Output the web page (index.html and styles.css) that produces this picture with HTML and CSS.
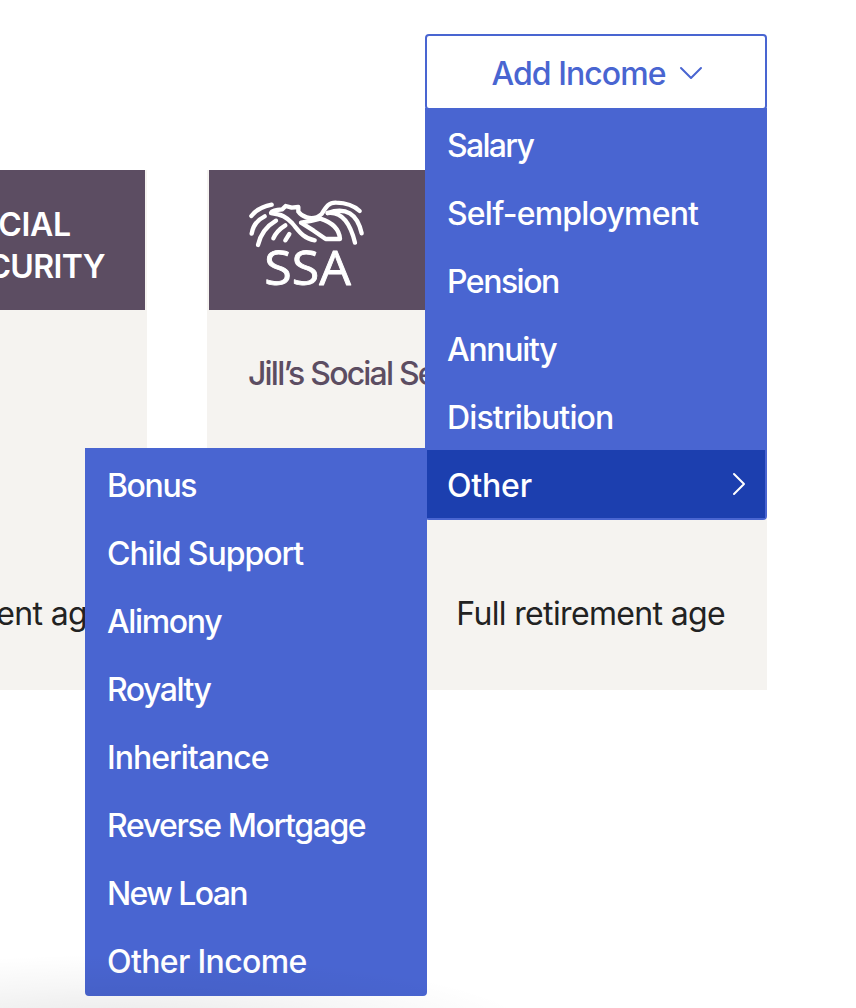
FILE: index.html
```
<!DOCTYPE html>
<html lang="en">
<head>
<meta charset="utf-8">
<title>Income</title>
<link rel="stylesheet" href="styles.css">
</head>
<body>
<main class="page">
  <section class="cards">
    <article class="card">
      <header class="card-head card-head-end"><span class="brand"><span class="brand-top">SOCIAL</span><br>SECURITY</span></header>
      <div class="card-body"><p class="card-title"></p><p class="card-age"><span class="t-age">Full retirement age</span></p></div>
    </article>
    <article class="card">
      <header class="card-head">
        <svg class="logo" viewBox="42 45 345 258" fill="none" stroke="#fff" stroke-width="13" stroke-linecap="round" stroke-linejoin="round">
          <path d="M49 93Q69 67 110 59"/>
          <path d="M50 146Q56 110 89 94"/>
          <path d="M69 180Q80 132 123 107"/>
          <path d="M115 160Q125 137 151 121"/>
          <path d="M151 166L163 147"/>
          <path d="M239 166C202 159 190 135 172 115C154 96 140 88 108 84C110 77 122 75 142 73L152 63L170 68L190 66V80Q198 92 215 97Q240 105 260 87C275 62 282 52 304 53Q348 54 374 78"/>
          <path d="M256 101Q228 109 198 113L236 137L272 162H315Q312 119 256 101"/>
          <path d="M278 84C318 79 344 107 360 173"/>
          <path d="M278 84Q360 56 380 145"/>
          <text class="logo-text" x="88" y="299" textLength="260" lengthAdjust="spacingAndGlyphs">SSA</text>
        </svg>
      </header>
      <div class="card-body"><p class="card-title"><span class="t-title">Jill’s Social Security</span></p><p class="card-age"><span class="t-age">Full retirement age</span></p></div>
    </article>
  </section>
  <div class="dropdown">
    <button class="toggle"><span class="t-add">Add Income</span>
      <svg class="chev-down" viewBox="0 0 24 14"><path d="M2 2L12 12L22 2"/></svg>
    </button>
    <ul class="menu">
      <li><span class="t-salary">Salary</span></li>
      <li><span class="t-self">Self-employment</span></li>
      <li><span class="t-pension">Pension</span></li>
      <li><span class="t-annuity">Annuity</span></li>
      <li><span class="t-dist">Distribution</span></li>
      <li class="active"><span class="t-other">Other</span>
        <svg class="chev-right" viewBox="0 0 14 24"><path d="M2 2L12 12L2 22"/></svg>
      </li>
    </ul>
    <ul class="menu submenu">
      <li><span class="t-bonus">Bonus</span></li>
      <li><span class="t-child">Child Support</span></li>
      <li><span class="t-alimony">Alimony</span></li>
      <li><span class="t-royalty">Royalty</span></li>
      <li><span class="t-inherit">Inheritance</span></li>
      <li><span class="t-reverse">Reverse Mortgage</span></li>
      <li><span class="t-loan">New Loan</span></li>
      <li><span class="t-income">Other Income</span></li>
    </ul>
  </div>
  <div class="shade"></div>
</main>
</body>
</html>
```
FILE: styles.css
```
* { box-sizing: border-box; }
body { margin: 0; background: #fff; }
.page {
  position: relative;
  width: 856px;
  height: 1008px;
  padding-top: 170px;
  overflow: hidden;
  font-family: Inter, "Liberation Sans", sans-serif;
  font-size: 32px;
  letter-spacing: -0.5px;
}
.cards { display: flex; gap: 60px; width: 1180px; margin-left: -413px; }
.card { width: 560px; height: 520px; background: #f5f3f0; }
.card-head {
  display: flex;
  height: 140px;
  margin: 0 2px;
  padding: 30px 40px;
  background: #5c4d62;
  color: #fff;
}
.card-head-end { justify-content: flex-end; align-items: center; }
.brand { font-weight: 600; line-height: 42px; padding-top: 12px; letter-spacing: -0.6px; }
.brand-top { padding-left: 5px; letter-spacing: -0.3px; }
.logo { width: 115px; height: 86px; overflow: visible; }
.logo-text {
  font-family: "Open Sans", sans-serif;
  font-size: 142px;
  font-weight: 400;
  fill: #fff;
  stroke-width: 2.5;
  letter-spacing: 0;
}
.card-body { padding: 40px 42px; }
.card-title, .card-age { margin: 0; line-height: 48px; height: 48px; white-space: nowrap; }
.card-title { color: #5c4d62; font-weight: 450; }
.card-age { margin-top: 192px; text-align: right; color: #222; }
.dropdown { position: absolute; top: 34px; left: 425px; width: 342px; }
.toggle {
  display: flex;
  justify-content: center;
  align-items: center;
  gap: 13px;
  width: 342px;
  height: 76px;
  padding: 2px 0 0 2px;
  border: 2px solid #4965d1;
  border-radius: 4px;
  background: #fff;
  color: #4965d1;
  font: inherit;
  font-weight: 450;
  letter-spacing: inherit;
}
.chev-down { width: 24px; height: 14px; }
.chev-down path, .chev-right path {
  fill: none;
  stroke: #4965d1;
  stroke-width: 2;
  stroke-linecap: round;
  stroke-linejoin: round;
}
.chev-right { width: 14px; height: 24px; margin-right: -1px; }
.chev-right path { stroke: #fff; }
.menu {
  width: 342px;
  margin: -2px 0 0;
  padding: 0;
  border: 2px solid #4965d1;
  border-radius: 0 0 4px 4px;
  background: #4965d1;
  color: #fff;
  font-weight: 450;
  list-style: none;
}
.menu li {
  display: flex;
  align-items: center;
  justify-content: space-between;
  height: 68px;
  padding: 0 20px;
  white-space: nowrap;
}
.menu li span { padding-top: 2px; }
.menu .active { background: #1c3faf; }
.submenu { position: absolute; top: 414px; left: -340px; margin: 0; }
.t-title { letter-spacing: -1.8px; margin-left: -1px; }
.t-age { letter-spacing: -0.65px; }
.t-add { letter-spacing: -0.95px; }
.t-salary { letter-spacing: -1.7px; }
.t-self { letter-spacing: -0.8px; }
.t-pension { letter-spacing: -1.5px; }
.t-annuity { letter-spacing: -1.3px; }
.t-dist { letter-spacing: -0.85px; }
.t-other { letter-spacing: -0.2px; }
.t-bonus { letter-spacing: -1.4px; }
.t-child { letter-spacing: -1.05px; }
.t-alimony { letter-spacing: -1.35px; }
.t-royalty { letter-spacing: -1.5px; }
.t-inherit { letter-spacing: -1px; }
.t-reverse { letter-spacing: -1.4px; }
.t-loan { letter-spacing: -1.6px; }
.t-income { letter-spacing: -0.65px; }
.shade {
  position: absolute;
  inset: 928px 0 0 0;
  background: radial-gradient(ellipse 420px 80px at 120px 106px, rgba(0,0,0,.1), rgba(0,0,0,.035) 60%, rgba(0,0,0,0));
}
```
